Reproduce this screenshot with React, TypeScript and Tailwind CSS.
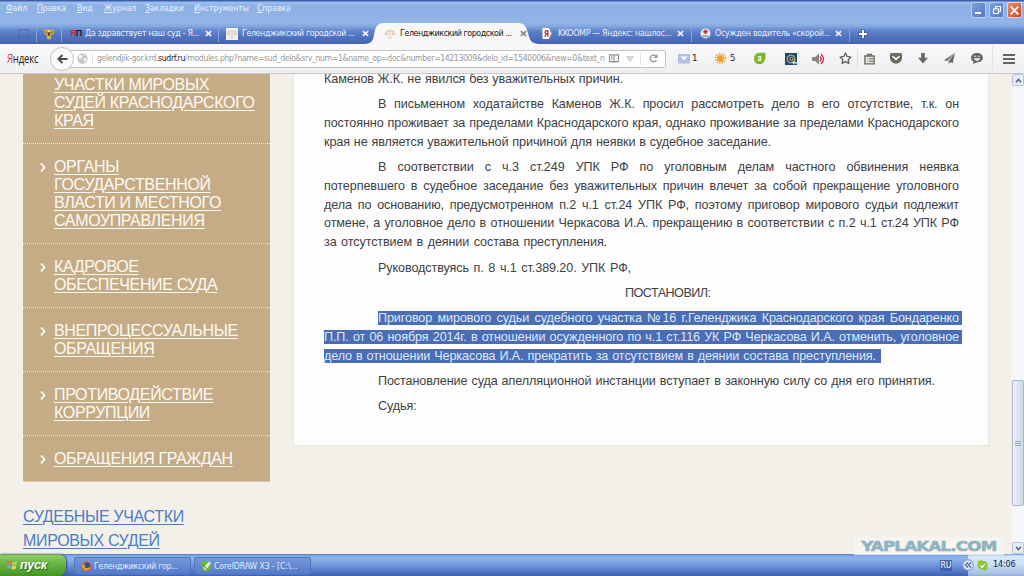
import React from "react";
import { FiStar } from "react-icons/fi";

const ui = "font-['DejaVu_Sans_Condensed','DejaVu_Sans','Noto_Sans',sans-serif]";

const MENU: { label: string; w: string }[] = [
  { label: "Файл", w: "w-[31px]" },
  { label: "Правка", w: "w-[40px]" },
  { label: "Вид", w: "w-[27px]" },
  { label: "Журнал", w: "w-[41px]" },
  { label: "Закладки", w: "w-[49px]" },
  { label: "Инструменты", w: "w-[63px]" },
  { label: "Справка", w: "w-[40px]" },
];

function Cross({ color }: { color: string }) {
  return (
    <svg viewBox="0 0 8 8" className="h-[7px] w-[7px] shrink-0">
      <path d="M1 1.2 7 6.8M7 1.2 1 6.8" stroke={color} strokeWidth="1.9" />
    </svg>
  );
}

function Scales({ white }: { white?: boolean }) {
  return (
    <svg viewBox="0 0 12 12" className="h-3 w-3 shrink-0">
      {white && <rect width="12" height="12" fill="#f3f1ee" />}
      <path
        d="M6 1.5v8M2 3.2h8M2.4 3.2 1 6.6h3L2.6 3.2M9.4 3.2 8 6.6h3L9.6 3.2M4 9.8h4"
        stroke={white ? "#d6c6ae" : "#dcc3a6"}
        strokeWidth=".9"
        fill="none"
      />
    </svg>
  );
}

function TitleBar() {
  return (
    <header className="relative flex h-11 shrink-0 flex-col bg-[linear-gradient(180deg,#3f5fa9_0,#3f5fa9_1px,#9dc0f0_2px,#8db0e5_6px,#92b5e8_22px,#86a9df_26px,#5f82ca_31px,#5275c0_36px,#4263b2_44px)]">
      <nav className={`flex h-4 items-center pl-[6px] text-[8.6px] tracking-[-0.05px] text-[#e9f1fd] ${ui}`}>
        {MENU.map((m) => (
          <span key={m.label} className={`${m.w} shrink-0 whitespace-nowrap`}>
            <span className="inline-block leading-[11px] first-letter:underline">{m.label}</span>
          </span>
        ))}
      </nav>
      <div className={`mt-[7px] flex h-[21px] items-center text-[8.8px] tracking-[-0.31px] text-[#e6effc] ${ui}`}>
        <div className="flex w-9 justify-end pr-[7px]">
          <div className="h-[9px] w-[11px] border border-dotted border-[#3c5795]" />
        </div>
        <div className="flex h-[17px] w-[26px] items-center justify-center border-x border-[#86a4dc]">
          <svg viewBox="0 0 14 14" className="h-3 w-3">
            <path d="M7 3 1 1.5 2 7l3 2-1 3 3 1.5L10 12 9 9l3-2 1-5.500z" fill="#d9b24c" />
            <path d="M2 3l3 2-1 2zM12 3 9 5l1 2z" fill="#8a6424" />
            <path d="M5.500 5h3v3L7 9.500 5.500 8z" fill="#5a451c" />
            <circle cx="7" cy="3.500" r="1.400" fill="#f4dc6c" />
          </svg>
        </div>
        <div className="flex h-[17px] w-[157px] items-center border-r border-[#86a4dc] pl-2">
          <b className="w-[15px] font-['Liberation_Sans',sans-serif] text-[9px] leading-none tracking-[-0.800px]">
            <span className="text-[#e41c39]">Я</span>
            <span className="text-[#111827]">П</span>
          </b>
          <span className="w-[120px] whitespace-nowrap tracking-[-0.31px]">Да здравствует наш суд - Я...</span>
          <Cross color="#eef4ff" />
        </div>
        <div className="flex h-[17px] w-[150px] items-center pl-[7px]">
          <Scales white />
          <span className="ml-1 w-[120px] whitespace-nowrap tracking-[-0.38px]">Геленджикский городской ...</span>
          <Cross color="#eef4ff" />
        </div>
        <div className="relative z-10 -ml-1 flex h-[21px] w-[174px] items-center pl-[19px] text-[#161616]">
          <svg viewBox="0 0 174 21" className="absolute inset-0 h-[21px] w-[174px]">
            <path d="M0 21C9 20 8 16 10 7Q12 0 18 0H154Q160 0 162 7C165 16 164 20 174 21Z" fill="#f7f7f8" />
          </svg>
          <div className="relative flex items-center">
            <Scales />
            <span className="ml-[4px] w-[120px] whitespace-nowrap tracking-[-0.41px]">Геленджикский городской ...</span>
            <Cross color="#85888c" />
          </div>
        </div>
        <div className="flex h-[17px] w-[153px] items-center border-r border-[#86a4dc] pl-[3px]">
          <svg viewBox="0 0 10 12" className="h-[11px] w-[10px] shrink-0">
            <path d="M1 0h6l3 6-3 6H1Q0 12 0 11V1Q0 0 1 0z" fill="#fff" />
            <path d="M6 2.500v7M6 3H4.500a1.500 1.500 0 0 0 0 3.200H6M4.600 6.200 2.500 9.500" stroke="#d82b24" strokeWidth="1.400" fill="none" />
          </svg>
          <span className="ml-[6px] w-[119px] whitespace-nowrap tracking-[-0.31px]">KKOOMP — Яндекс: нашлос...</span>
          <Cross color="#eef4ff" />
        </div>
        <div className="flex h-[17px] w-[158px] items-center border-r border-[#86a4dc] pl-2">
          <svg viewBox="0 0 12 12" className="h-[11px] w-[11px] shrink-0">
            <circle cx="6" cy="6" r="5.500" fill="#f1eeee" />
            <path d="M2 8h8l-1 2H3z" fill="#9b9da3" />
            <path d="M6 1.500v5M3.500 4h5" stroke="#d51f2b" strokeWidth="2" />
          </svg>
          <span className="ml-1 w-[120px] whitespace-nowrap">Осужден водитель «скорой...</span>
          <Cross color="#eef4ff" />
        </div>
        <svg viewBox="0 0 10 10" className="ml-[8px] h-[10px] w-[10px]">
          <path d="M5 0.500v9M.5 5h9" stroke="#2f4a82" strokeWidth="3.200" />
          <path d="M5 1v8M1 5h8" stroke="#fff" strokeWidth="1.800" />
        </svg>
      </div>
      <div className="absolute right-[2px] top-[2px] flex gap-[3px]">
        <span className="flex h-4 w-[15px] items-end rounded-[2px] border border-[#b8cff4] bg-[linear-gradient(135deg,#7d9fe0,#5377c4)] pb-[3px] pl-[3px]">
          <i className="h-[2px] w-[6px] bg-white" />
        </span>
        <span className="flex h-4 w-[15px] items-center justify-center rounded-[2px] border border-[#b8cff4] bg-[linear-gradient(135deg,#7d9fe0,#5377c4)]">
          <svg viewBox="0 0 10 10" className="h-[10px] w-[10px]">
            <path d="M3.500 3.500V1.500h5v5h-2M1.500 4h5v4.500h-5z" fill="none" stroke="#fff" strokeWidth="1.100" />
          </svg>
        </span>
        <span className="flex h-4 w-[15px] items-center justify-center rounded-[2px] border border-[#efd3d3] bg-[linear-gradient(135deg,#ee8d6e,#cf4223)]">
          <svg viewBox="0 0 10 10" className="h-[11px] w-[11px]">
            <path d="M1.500 1.500l7 7M8.500 1.500l-7 7" stroke="#fff" strokeWidth="1.600" />
          </svg>
        </span>
      </div>
    </header>
  );
}

function ToolIcons() {
  return (
    <div className={`flex h-full flex-1 items-center text-[9.500px] text-[#222] ${ui}`}>
      <svg viewBox="0 0 12 10" className="ml-[12px] h-[10px] w-3">
        <rect width="12" height="9.500" fill="#b3c0e2" />
        <path d="M2.500 2.500h7L6 6.500z" fill="#fff" />
      </svg>
      <span className="ml-[2px] w-[10px]">1</span>
      <svg viewBox="0 0 14 14" className="ml-[12px] h-[13px] w-[13px]">
        <circle cx="7" cy="7" r="5.300" fill="none" stroke="#efa437" strokeWidth="2" strokeDasharray="1.400 1.370" />
        <circle cx="7" cy="7" r="3.800" fill="#f0a02a" />
      </svg>
      <span className="ml-[3px] w-[10px]">5</span>
      <svg viewBox="0 0 14 14" className="ml-[13px] h-[13px] w-[14px]">
        <path d="M1 4C3 0 9 1 13 1c0 5 0 8-3 11-4 2.500-9 .5-9.500-4z" fill="#7eb72b" />
        <text x="6.500" y="10.200" fontSize="8.500" textAnchor="middle" fill="#fff" fontFamily="Liberation Sans, sans-serif" fontWeight="700">3</text>
      </svg>
      <svg viewBox="0 0 12 12" className="ml-[18px] h-3 w-3">
        <rect width="12" height="12" fill="#124a80" />
        <circle cx="6" cy="6" r="3.800" fill="none" stroke="#b39a58" strokeWidth="1.500" />
        <circle cx="6.500" cy="6" r="1.600" fill="none" stroke="#c9ae62" />
        <path d="M7 9.500l2.500-2V9H12v1.500H9.500V12z" fill="#cde3f3" />
      </svg>
      <svg viewBox="0 0 13 12" className="ml-[15px] h-3 w-[13px]">
        <path d="M0 4h3l4-3.500v11L3 8H0z" fill="#8b8780" />
        <path d="M8 3.500q2.200 2.500 0 5M9 1q5 5 0 10" fill="none" stroke="#d82d48" strokeWidth="1.400" />
      </svg>
      <FiStar className="ml-[14px] h-[13px] w-[13px] text-[#65615a]" strokeWidth={2.4} />
      <i className="ml-[5px] h-5 w-px bg-[#dedfe2]" />
      <svg viewBox="0 0 12 12" className="ml-[6px] h-3 w-[11px]" fill="none" stroke="#6d685f">
        <path d="M1 2.700h10v8.600H1z" strokeWidth="1.500" />
        <path d="M4 2.500V1h4v1.500" strokeWidth="1.400" />
        <path d="M3 5.200h1M5 5.200h5M3 7h1M5 7h5M3 8.900h1M5 8.900h5" strokeWidth=".9" />
      </svg>
      <svg viewBox="0 0 12 11" className="ml-[15px] h-[11px] w-3">
        <path d="M1.500 0h9Q12 0 12 1.500V5A6 5.800 0 0 1 0 5V1.500Q0 0 1.500 0z" fill="#6d675f" />
        <path d="M3 3.500 6 6.300l3-2.800" fill="none" stroke="#fff" strokeWidth="1.600" strokeLinecap="round" />
      </svg>
      <svg viewBox="0 0 10 11" className="ml-[16px] h-[11px] w-[10px]">
        <path d="M3.200 0h3.600v4.800H10L5 10.500 0 4.800h3.200z" fill="#6d675f" />
      </svg>
      <svg viewBox="0 0 12 12" className="ml-[16px] h-[11px] w-[11px]">
        <path d="M12 0 0 8l3.500.8zM12 0 5 9v3l1.800-2 2.700 1z" fill="#6d675f" />
      </svg>
      <svg viewBox="0 0 13 12" className="ml-[16px] h-[11px] w-[12px]">
        <path d="M6.500 0C10 0 13 2 13 5.200s-3 5-6 5L2 12l.8-2.500C1 8.500 0 7 0 5.200 0 2 3 0 6.500 0z" fill="#6d675f" />
        <path d="M3.500 3.600h2M7.500 3.600h2" stroke="#eee" />
        <path d="M3 5.600h7Q9 8.800 6.500 8.800T3 5.600z" fill="#eee" />
      </svg>
      <i className="ml-[9px] h-[28px] w-px bg-[#e2e3e5]" />
      <svg viewBox="0 0 12 10" className="ml-[10px] h-[10px] w-3">
        <path d="M0 1h12M0 5h12M0 9h12" stroke="#69655e" strokeWidth="2" />
      </svg>
    </div>
  );
}

function Toolbar() {
  return (
    <div className="flex h-[30px] shrink-0 items-center border-b border-[#c9c7c9] bg-[linear-gradient(180deg,#f8f8f9,#efeff1)]">
      <div className="w-[50px] pl-[7px] font-['Open_Sans','Noto_Sans',sans-serif] text-[13.500px] leading-none tracking-[-0.300px] text-[#26221f]">
        <span className="inline-block origin-left scale-x-[0.710] whitespace-nowrap">
          <span className="text-[#e0312c]">Я</span>ндекс
        </span>
      </div>
      <div className="z-10 flex h-6 w-6 shrink-0 items-center justify-center rounded-full border border-[#bfc1c4] bg-[#fafafa]">
        <svg viewBox="0 0 12 10" className="h-[10px] w-[11px]">
          <path d="M6 .7 1.500 5 6 9.300M2 5h9.500" fill="none" stroke="#514d47" strokeWidth="2.200" />
        </svg>
      </div>
      <div className="-ml-[5px] flex h-[18px] w-[597px] shrink-0 items-center rounded-r-[2px] border border-[#c3c5c9] bg-white pl-[7px]">
        <svg viewBox="0 0 12 12" className="h-[11px] w-[11px] shrink-0">
          <circle cx="6" cy="6" r="5.600" fill="#c4c5c7" />
          <path d="M2 2.500 5 2l1 2-2 3-2-1zM7 6l3-1 .5 3L8 10zM7 1l2 1.500-1.500.8z" fill="#eff0f1" />
        </svg>
        <i className="ml-[4px] mr-[4px] h-[10px] w-px bg-[#dfe0e2]" />
        <span className={`w-[511px] shrink-0 whitespace-nowrap text-[8.600px] tracking-[-0.345px] text-[#979797] ${ui}`}>
          gelendjik-gor.krd.<span className="text-[#161616]">sudrf.ru</span>/modules.php?name=sud_delo&amp;srv_num=1&amp;name_op=doc&amp;number=14213009&amp;delo_id=1540006&amp;new=0&amp;text_n
        </span>
        <svg viewBox="0 0 12 10" className="h-[9px] w-3 shrink-0">
          <path d="M6 8.500H1V1h4l1 1 1-1h4v7.500H7.500L6 9.500zM6 2v6M2.500 3.500h2M2.500 5.500h2" fill="none" stroke="#8f8f91" strokeWidth="1.200" />
        </svg>
        <svg viewBox="0 0 8 6" className="ml-[6px] h-[6px] w-2 shrink-0">
          <path d="M.5.5h7L4 5.500z" fill="#dadbdc" stroke="#bfc0c2" strokeWidth=".6" />
        </svg>
        <i className="ml-[6px] h-[12px] w-px bg-[#dfe0e2]" />
        <svg viewBox="0 0 10 10" className="ml-[8px] h-[9px] w-[9px] shrink-0">
          <path d="M8.300 6.500A3.700 3.700 0 1 1 7.500 2.200" fill="none" stroke="#929497" strokeWidth="1.500" />
          <path d="M9.500 0v4.500H5z" fill="#929497" />
        </svg>
      </div>
      <ToolIcons />
    </div>
  );
}

const SIDE: string[][] = [
  ["УЧАСТКИ МИРОВЫХ", "СУДЕЙ КРАСНОДАРСКОГО", "КРАЯ"],
  ["ОРГАНЫ", "ГОСУДАРСТВЕННОЙ", "ВЛАСТИ И МЕСТНОГО", "САМОУПРАВЛЕНИЯ"],
  ["КАДРОВОЕ", "ОБЕСПЕЧЕНИЕ СУДА"],
  ["ВНЕПРОЦЕССУАЛЬНЫЕ", "ОБРАЩЕНИЯ"],
  ["ПРОТИВОДЕЙСТВИЕ", "КОРРУПЦИИ"],
  ["ОБРАЩЕНИЯ ГРАЖДАН"],
];

function Sidebar() {
  return (
    <aside className="ml-[23px] w-[247px] shrink-0 font-['Liberation_Sans',Arial,sans-serif]">
      <ul className="bg-[#c5ac87]">
        {SIDE.map((lines, i) => (
          <li
            key={lines[0]}
            className={`flex border-b border-dotted border-[#f1e8da] pb-[13px] pl-[17px] text-[16px] leading-[18px] tracking-[-0.35px] text-[#fdfaf4] ${i === 0 ? "pt-[2px]" : "pt-[14px]"}`}
          >
            <span className="w-[14px] shrink-0 pt-[5px]">
              {i > 0 && (
                <svg viewBox="0 0 6 9" className="h-[9px] w-[6px]">
                  <path d="M1 .5 4.500 4.500 1 8.500" fill="none" stroke="#fff" strokeWidth="1.700" />
                </svg>
              )}
            </span>
            <a>
              {lines.map((l) => (
                <span key={l} className="block whitespace-nowrap underline decoration-1 underline-offset-2">{l}</span>
              ))}
            </a>
          </li>
        ))}
      </ul>
      <a className="mt-[23px] block whitespace-nowrap text-[16px] leading-6 tracking-[-0.33px] text-[#4d7cc6] underline decoration-1 underline-offset-2">
        СУДЕБНЫЕ УЧАСТКИ
        <br />
        МИРОВЫХ СУДЕЙ
      </a>
    </aside>
  );
}

type Row = { t: string; w: string; first?: boolean; gap?: boolean; sel?: boolean };

const ROWS: Row[] = [
  { t: "Каменов Ж.К. не явился без уважительных причин.", w: "w-[299px]" },
  { t: "В письменном ходатайстве Каменов Ж.К. просил рассмотреть дело в его отсутствие, т.к. он", w: "w-[581px]", first: true, gap: true },
  { t: "постоянно проживает за пределами Краснодарского края, однако проживание за пределами Краснодарского", w: "w-[635px]" },
  { t: "края не является уважительной причиной для неявки в судебное заседание.", w: "w-[447px]" },
  { t: "В соответствии с ч.3 ст.249 УПК РФ по уголовным делам частного обвинения неявка", w: "w-[581px]", first: true, gap: true },
  { t: "потерпевшего в судебное заседание без уважительных причин влечет за собой прекращение уголовного", w: "w-[635px]" },
  { t: "дела по основанию, предусмотренном п.2 ч.1 ст.24 УПК РФ, поэтому приговор мирового судьи подлежит", w: "w-[635px]" },
  { t: "отмене, а уголовное дело в отношении Черкасова И.А. прекращению в соответствии с п.2 ч.1 ст.24 УПК РФ", w: "w-[635px]" },
  { t: "за отсутствием в деянии состава преступления.", w: "w-[283px]" },
  { t: "Руководствуясь п. 8 ч.1 ст.389.20. УПК РФ,", w: "w-[253px]", first: true, gap: true },
  { t: "ПОСТАНОВИЛ:", w: "w-[86px] ml-[301px] tracking-[-0.53px]", gap: true },
  { t: "Приговор мирового судьи судебного участка №16 г.Геленджика Краснодарского края Бондаренко", w: "w-[584px] pr-[3px]", first: true, gap: true, sel: true },
  { t: "П.П. от 06 ноября 2014г. в отношении осужденного по ч.1 ст.116 УК РФ Черкасова И.А. отменить, уголовное", w: "w-[638px] pr-[3px]", sel: true },
  { t: "дело в отношении Черкасова И.А. прекратить за отсутствием в деянии состава преступления.", w: "w-[557px] pr-[5px]", sel: true },
  { t: "Постановление суда апелляционной инстанции вступает в законную силу со дня его принятия.", w: "w-[557px]", first: true, gap: true },
  { t: "Судья:", w: "w-[39px]", first: true, gap: true },
];

function Article() {
  return (
    <article className="ml-[23px] h-[372px] w-[696px] shrink-0 overflow-hidden border-x border-b border-[#e9e5de] bg-[#fdfdfd] pl-[30px] font-['Liberation_Sans',Arial,sans-serif] text-[12.600px] tracking-[-0.1px] text-[#414143]">
      <div className="-mt-[4.300px]">
        {ROWS.map((r) => (
          <p key={r.t} className={`flex h-[18.850px] items-center ${r.gap ? "mt-[6.350px]" : ""} ${r.first ? "pl-[54px]" : ""}`}>
            <span
              className={`block h-[14.500px] shrink-0 whitespace-nowrap text-justify leading-[15px] [text-align-last:justify] ${r.w} ${r.sel ? "bg-[#4a6db5] text-[#dfe8f8]" : ""}`}
            >
              {r.t}
            </span>
          </p>
        ))}
      </div>
    </article>
  );
}

function ScrollButton({ down }: { down?: boolean }) {
  return (
    <span className="flex h-3 w-3 items-center justify-center rounded-[2px] border border-[#b5c2d8] bg-[#e6ecf6]">
      <svg viewBox="0 0 8 6" className="h-[5px] w-[7px]">
        <path d={down ? "M1 1l3 3.500L7 1" : "M1 5l3-3.500L7 5"} fill="none" stroke="#4d5b70" strokeWidth="1.700" />
      </svg>
    </span>
  );
}

function Taskbar() {
  return (
    <footer className="flex h-[22px] shrink-0 items-stretch bg-[linear-gradient(180deg,#5276b8_0,#86aee8_2px,#8db2ea_5px,#6d92d6_12px,#4b6ebc_19px,#3f61ae_22px)]">
      <div className="flex w-[66px] items-center rounded-r-[8px] bg-[linear-gradient(180deg,#6ea050_0,#8fcc68_2px,#6fb84a_8px,#55a535_16px,#459328_22px)] pl-[7px] shadow-[1px_0_2px_#2c4a80]">
        <svg viewBox="0 0 12 12" className="h-3 w-[11px]">
          <path d="M1 2q2-1.500 4 0L4.500 5.500q-2-1-4 0z" fill="#ef6a35" />
          <path d="M6 2q2 1.500 5 0l-.7 4q-2 1.200-4.800-.5z" fill="#9bdc55" />
          <path d="M.5 6.500q2-1 4 0L4 10q-2-1-4 0z" fill="#6fa9ee" />
          <path d="M5.500 6.500q2.500 1.500 4.800 0L9.500 10q-2.500 1.300-4.500 0z" fill="#f8d649" />
        </svg>
        <span className="ml-[2px] font-['Liberation_Sans',sans-serif] text-[12.500px] font-bold italic leading-none tracking-[-0.300px] text-white [text-shadow:1px_1px_1px_#2a6316]">пуск</span>
      </div>
      <div className={`flex items-center gap-[3px] pl-[8px] text-[8.600px] text-[#e3edfc] ${ui}`}>
        <div className="mt-[2px] flex h-[18px] w-[117px] items-center rounded-[2px] border border-[#4f74bf] bg-[linear-gradient(180deg,#7398dc,#557ac8)] pl-[6px]">
          <svg viewBox="0 0 12 12" className="h-[11px] w-[11px] shrink-0">
            <circle cx="6" cy="6" r="5.500" fill="#d9622b" />
            <circle cx="6.800" cy="4.800" r="3.300" fill="#2b4f9c" />
            <path d="M1 3q1 2 4 2L4 7q3 2 6-1-1 5-5 4T1 3z" fill="#eea03a" />
          </svg>
          <span className="ml-[2px] whitespace-nowrap tracking-[-0.25px]">Геленджикский гор...</span>
        </div>
        <div className="mt-[2px] flex h-[18px] w-[117px] items-center rounded-[2px] border border-[#4f74bf] bg-[linear-gradient(180deg,#7398dc,#557ac8)] pl-[5px]">
          <svg viewBox="0 0 12 12" className="h-[12px] w-[12px] shrink-0">
            <path d="M2 1q4-1 6 1l3 4q0 4-4 5.500Q3 12 2 9 .5 6 2 1z" fill="#65b83c" />
            <path d="M3 8 9 1.500 11 3 6 10z" fill="#e6f5d5" />
            <path d="M3 5 7 9" stroke="#397d24" />
          </svg>
          <span className="ml-[2px] whitespace-nowrap tracking-[-0.05px]">CorelDRAW X3 - [C:\...</span>
        </div>
      </div>
      <div className={`ml-auto flex items-center text-[9px] ${ui}`}>
        <span className="mr-[16px] mt-px flex h-[11px] w-3 items-center justify-center bg-[#3f61ae] text-[8.700px] text-white">RU</span>
        <div className="flex h-full w-[56px] items-center bg-[linear-gradient(180deg,#7597cc_0,#d9e8fa_2px,#cfdff5_10px,#a5bde3_20px,#90aad6_22px)] text-[#17253f]">
          <svg viewBox="0 0 12 12" className="-ml-[6px] h-3 w-3 shrink-0">
            <circle cx="6" cy="6" r="5.300" fill="#d9e5f6" stroke="#7895c8" />
            <path d="M6 3.500 3.500 6 6 8.500M9 3.500 6.500 6 9 8.500" fill="none" stroke="#3f5d94" strokeWidth="1.100" />
          </svg>
          <svg viewBox="0 0 12 12" className="ml-[3px] h-[11px] w-[11px] shrink-0">
            <path d="M1 1q4-1.500 6 0 5 0 4.500 6v4q-4 1-6-.5Q0 10 .5 5z" fill="#8cc63a" />
            <path d="M3.500 6l2 2 3-3.500" fill="none" stroke="#fff" strokeWidth="1.300" />
          </svg>
          <span className="ml-[5px] tracking-[-0.2px]">14:06</span>
        </div>
      </div>
    </footer>
  );
}

export default function App() {
  return (
    <div className="relative flex h-[576px] w-[1024px] flex-col overflow-hidden">
      <TitleBar />
      <Toolbar />
      <main className="flex h-[480px] shrink-0 overflow-hidden bg-[#f3f0ea]">
        <Sidebar />
        <Article />
        <div className="ml-auto flex h-full w-3 flex-col bg-[#f5f7fa]">
          <ScrollButton />
          <div className="mt-[294px] flex h-[126px] w-3 flex-col items-center justify-center gap-[1px] rounded-[2px] border border-[#a7b5ce] bg-[linear-gradient(90deg,#eef2f8,#cfd9e8)]">
            <i className="h-px w-[6px] bg-[#93a3bd]" />
            <i className="h-px w-[6px] bg-[#93a3bd]" />
            <i className="h-px w-[6px] bg-[#93a3bd]" />
          </div>
          <div className="mt-auto">
            <ScrollButton down />
          </div>
        </div>
      </main>
      <Taskbar />
      <div className="absolute left-[854px] top-[537px] flex h-[18px] w-[150px] items-center justify-center bg-[#f7f6f3]/80">
        <span className="inline-block scale-x-[1.150] whitespace-nowrap font-['DejaVu_Sans',sans-serif] text-[14.500px] font-black leading-none tracking-[-0.700px] text-[#90b4bd] [-webkit-text-stroke:0.600px_#90b4bd]">YAPLAKAL.COM</span>
      </div>
    </div>
  );
}
